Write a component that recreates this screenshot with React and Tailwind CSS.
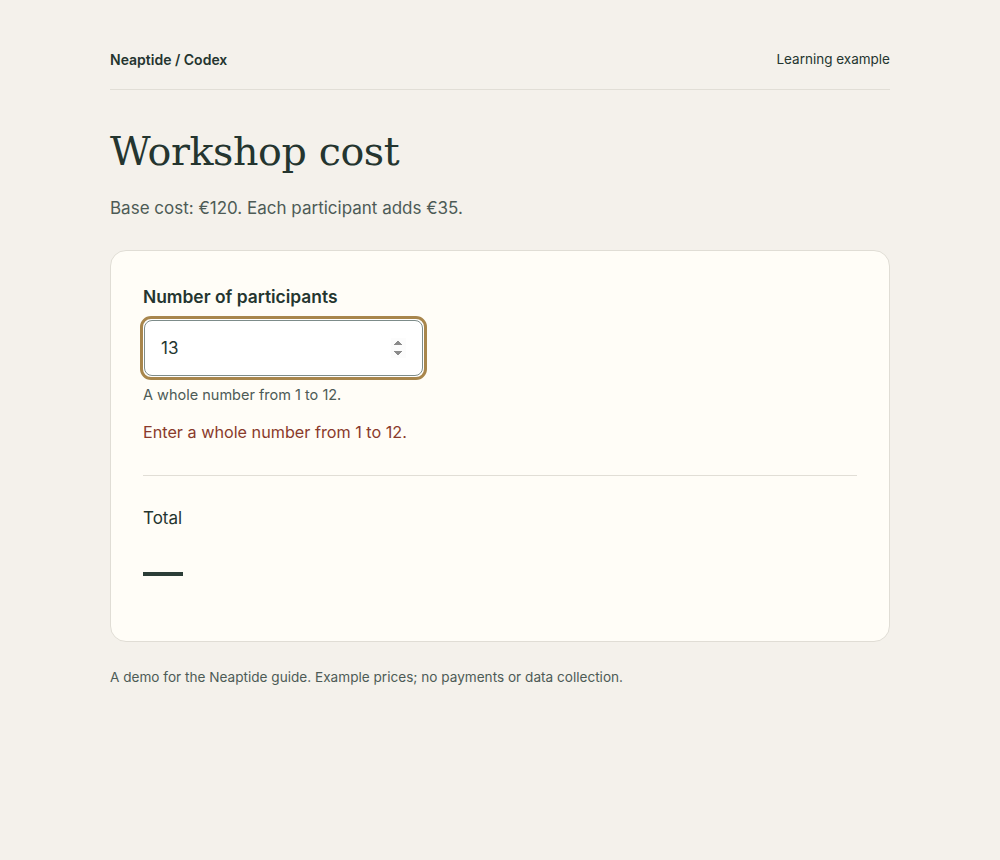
import { useState } from "react";

const App = () => {
  const [count, setCount] = useState("13");

  const n = Number(count);
  const valid = Number.isInteger(n) && n >= 1 && n <= 12 && count !== "";
  const total = valid ? 120 + n * 35 : null;

  return (
    <div className="min-h-screen bg-[#f4f1eb] text-[#24352f] font-['Inter','Noto_Sans',sans-serif]">
      <div className="w-[780px] mx-auto pt-[49px]">
        <header className="flex justify-between items-center pb-[19px] border-b border-[#e1ded6]">
          <span className="text-[14px] font-semibold">Neaptide / Codex</span>
          <span className="text-[13.5px]">Learning example</span>
        </header>

        <h1 className="mt-[36px] font-['DejaVu_Serif',serif] text-[39.6px] leading-[50px] tracking-[-0.4px]">
          Workshop cost
        </h1>
        <p className="mt-[20px] text-[17px] text-[#4d5b56]">
          Base cost: €120. Each participant adds €35.
        </p>

        <section className="mt-[28px] bg-[#fffdf7] border border-[#e0ddd5] rounded-[16px] px-[32px] pt-[34px] pb-[55px]">
          <label htmlFor="participants" className="block text-[17.4px] font-semibold leading-[24px]">
            Number of participants
          </label>
          <div className="mt-[7px] -ml-[3px] w-[287px] p-[1px] rounded-[11px] border-[3px] border-[#a8864c] bg-white">
            <input
              id="participants"
              type="number"
              min="1"
              max="12"
              step="1"
              autoFocus
              value={count}
              onChange={(e) => setCount(e.target.value)}
              className="block w-full h-[56px] rounded-[8px] border border-[#7d8c8a] bg-white px-[16px] text-[17px] text-[#24352f] outline-none"
            />
          </div>
          <p className="mt-[5px] text-[14.5px] leading-[20px] text-[#4d5b56]">A whole number from 1 to 12.</p>
          {!valid && (
            <p className="mt-[15px] text-[16.2px] leading-[24px] text-[#8a3a2b]">Enter a whole number from 1 to 12.</p>
          )}

          <div className="mt-[31px] border-t border-[#e1ded6]" />

          <p className="mt-[30px] text-[17px] leading-[25px]">Total</p>
          <div className="mt-[31px] h-[24px] flex items-center">
            {valid ? (
              <span className="text-[28px] font-semibold">€{total}</span>
            ) : (
              <span className="block w-[40px] h-[4px] bg-[#2b3d37]" />
            )}
          </div>
        </section>

        <p className="mt-[25px] text-[13.6px] leading-[20px] text-[#4d5b56]">
          A demo for the Neaptide guide. Example prices; no payments or data collection.
        </p>
      </div>
    </div>
  );
};

export default App;
